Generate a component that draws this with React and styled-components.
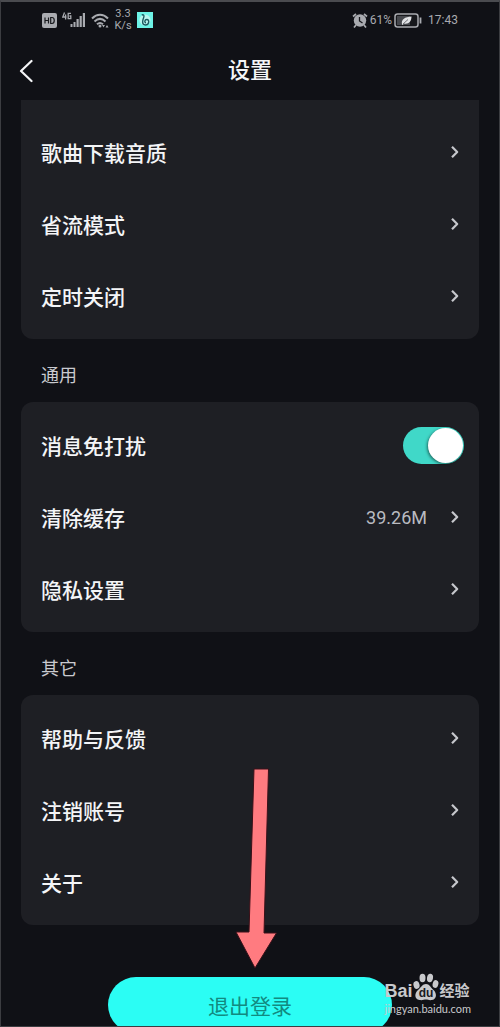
import React, { useState } from "react";
import styled, { createGlobalStyle, css } from "styled-components";

const GlobalStyle = createGlobalStyle`
	* {
		box-sizing: border-box;
	}

	body {
		margin: 0;
		background-color: #101116;
		color: #f4f5f7;
		font-family: Roboto, "Noto Sans CJK SC", sans-serif;
	}
`;

const Screen = styled.div`
	position: relative;
	height: 100vh;
	overflow: hidden;
	border: 1px solid #3c3d41;
	border-top: 2px solid #4a4b4f;
`;

const StatusBar = styled.div`
	display: flex;
	justify-content: space-between;
	align-items: center;
	height: 36px;
	padding: 0 41px;
	color: #a9abb0;
	font-size: 12px;
`;

const StatusGroup = styled.div`
	display: flex;
	align-items: center;
	gap: ${({ gap }) => gap}px;
`;

const Speed = styled.span`
	width: 18px;
	font-size: 11px;
	line-height: 12px;
	text-align: center;
`;

const Clock = styled.span`margin-left: 4px;`;

const Header = styled.header`
	display: grid;
	grid-template-columns: 50px 1fr 50px;
	align-items: center;
	height: 62px;
	padding-top: 4px;
`;

const BackButton = styled.button`
	display: flex;
	justify-content: center;
	padding: 0;
	border: 0;
	background: none;
	color: #f4f5f7;
`;

const Title = styled.h1`
	margin: 0;
	font-size: 22px;
	font-weight: 500;
	line-height: 30px;
	text-align: center;
`;

const Content = styled.main`padding: 0 20px;`;

const Card = styled.section`
	padding: 7px 15px 7px 20px;
	border-radius: 12px;
	background-color: #1e1f24;

	${({ continued }) =>
		continued &&
		css`
			padding-top: 16px;
			border-top-left-radius: 0;
			border-top-right-radius: 0;
		`};
`;

const SectionTitle = styled.h2`
	margin: 0;
	padding: 24px 20px 13px;
	color: #c9cacf;
	font-size: 18px;
	font-weight: 400;
	line-height: 26px;
`;

const rowStyle = css`
	display: flex;
	align-items: center;
	width: 100%;
	height: 72px;
	padding: 0;
	border: 0;
	background: none;
	color: inherit;
	font: inherit;
	font-size: 21px;
	font-weight: 500;
	text-align: left;
`;

const LinkRow = styled.button`
	${rowStyle};
	padding-right: 4px;
`;

const SwitchRow = styled.label`${rowStyle};`;

const RowLabel = styled.span`
	flex: 1;
`;

const RowValue = styled.span`
	margin-right: 23px;
	color: #b9bbc1;
	font-size: 18px;
	font-weight: 400;
`;

const Switch = styled.input`
	appearance: none;
	display: flex;
	width: 61px;
	height: 37px;
	margin: 0;
	border-radius: 19px;
	background-color: #55575e;

	&::before {
		content: "";
		width: 35px;
		height: 35px;
		margin: 1px;
		border-radius: 50%;
		background-color: #fff;
		box-shadow: -1px 1px 3px rgba(0, 0, 0, 0.5);
	}

	&:checked {
		justify-content: flex-end;
		background-color: #40d8c8;
	}
`;

const LogoutButton = styled.button`
	display: block;
	width: 62%;
	height: 56px;
	margin: 52px auto 0;
	border: 0;
	border-radius: 28px;
	background-color: #2bfdf4;
	color: #128a80;
	font: inherit;
	font-size: 21px;
`;

const ArrowMark = styled.svg`
	position: absolute;
	top: 766px;
	left: 234px;
`;

const Watermark = styled.div`
	position: absolute;
	right: 28px;
	bottom: 9px;
	color: #c8c9cc;
	font-family: Lato, "Noto Sans CJK SC", sans-serif;
	font-size: 11px;
	line-height: 16px;
`;

const WatermarkBrand = styled.div`
	display: flex;
	align-items: flex-end;
	height: 28px;
	font-family: "Liberation Sans", "Noto Sans CJK SC", sans-serif;
	font-weight: 700;
	line-height: 20px;
`;

const BrandLatin = styled.span`font-size: 18px;`;

const BrandHan = styled.span`
	margin-left: 1px;
	font-size: 15px;
`;

const HdIcon = () =>
	<svg width="15" height="15" viewBox="0 0 15 15">
		<rect width="15" height="15" rx="2" fill="currentColor" />
		<path
			d="M3 4.5v6M6.500 4.500v6M3 7.500h3.500M8.700 4.500v6h1.300c3 0 3-6 0-6z"
			fill="none"
			stroke="#17181c"
			strokeWidth="1.2"
		/>
	</svg>;

const SignalIcon = () =>
	<svg width="24" height="16" viewBox="0 0 24 16">
		<path
			d="M2.500 .5L.8 5h3.700M3.600 2.500V7.500M9 1.300H6.200v5.400h2.600V4H7.500"
			fill="none"
			stroke="currentColor"
			strokeWidth="1.3"
		/>
		<path
			d="M8.500 12h2v3H8.500zM11.500 10h2v5h-2zM14.500 7h2.200v8h-2.200zM17.600 4h2.200v11h-2.200zM20.800 1h2.200v14h-2.200z"
			fill="currentColor"
		/>
	</svg>;

const WifiIcon = () =>
	<svg width="18" height="15" viewBox="0 0 18 15">
		<path
			d="M1 5.500c5-5 11-5 16 0M3.500 8.500c3.500-3.300 7.500-3.300 11 0M6 11.300c2-1.700 4-1.700 6 0"
			fill="none"
			stroke="currentColor"
			strokeWidth="2"
		/>
		<circle cx="9" cy="13" r="1.5" fill="currentColor" />
		<path d="M11 12h3l-1.500 2.500zM14.500 14.500h3l-1.500-2.500z" fill="currentColor" />
	</svg>;

const AppIcon = () =>
	<svg width="16" height="16" viewBox="0 0 16 16">
		<rect width="16" height="16" fill="#6df3e6" />
		<circle cx="8" cy="8" r="5.500" fill="#b9f5ee" />
		<path
			d="M4.800 3c1.700-.8 2.700.5 1.900 2.500C5.500 8.500 4.500 12.700 8.300 13c3.700.2 4.700-5.500 1.500-5.500-2.300 0-2.600 3-.8 3.200"
			fill="none"
			stroke="#1c5a60"
			strokeWidth="1.4"
		/>
	</svg>;

const AlarmIcon = () =>
	<svg width="16" height="15" viewBox="0 0 16 15">
		<circle cx="8" cy="7.500" r="6.200" fill="currentColor" />
		<path
			d="M1 3.500L4 1M15 3.500L12 1M4 12l-2 2.500M12 12l2 2.500"
			stroke="currentColor"
			strokeWidth="1.7"
		/>
		<path d="M7.500 4v4l3 2" fill="none" stroke="#17181c" strokeWidth="1.3" />
	</svg>;

const BatteryIcon = () =>
	<svg width="28" height="15" viewBox="0 0 28 15">
		<rect
			x="1"
			y="1"
			width="23"
			height="13"
			rx="2.500"
			fill="#17181c"
			stroke="currentColor"
			strokeWidth="1.5"
		/>
		<rect x="3" y="3" width="13" height="9" fill="#46484d" />
		<path
			d="M8 11.500C7 6 11 4 17.500 3.500c0 5-3 8-7.500 7L8.500 12z"
			fill="#e2e3e6"
		/>
		<path d="M9 11l5-4.500" stroke="#55575c" strokeWidth=".8" />
		<path d="M26.500 4.500v6" stroke="currentColor" strokeWidth="1.8" />
	</svg>;

const BackIcon = () =>
	<svg width="14" height="24" viewBox="0 0 14 24">
		<path
			d="M12.500 2L2 12l10.500 10"
			fill="none"
			stroke="currentColor"
			strokeWidth="2.2"
			strokeLinecap="round"
			strokeLinejoin="round"
		/>
	</svg>;

const ChevronIcon = () =>
	<svg width="10" height="14" viewBox="0 0 10 14">
		<path
			d="M2 1.800L7.200 7 2 12.200"
			fill="none"
			stroke="#c6c7cc"
			strokeWidth="2.200"
			strokeLinejoin="round"
		/>
	</svg>;

const PawIcon = () =>
	<svg width="26" height="28" viewBox="0 0 26 28">
		<g fill="currentColor">
			<ellipse cx="3.500" cy="12" rx="3" ry="4" transform="rotate(-15 3.500 12)" />
			<ellipse cx="9.500" cy="5" rx="3" ry="4.200" />
			<ellipse cx="17" cy="5" rx="3" ry="4.200" transform="rotate(10 17 5)" />
			<ellipse cx="22.500" cy="11" rx="2.800" ry="4" transform="rotate(15 22.500 11)" />
			<path d="M13 11c3.500 0 4.500 3.500 7.500 6s4 9-1.500 10c-3 .5-4-.5-6-.5s-3.500 1-6.500.5C1 26 1.500 20 5 17s4.500-6 8-6z" />
		</g>
		<text
			x="13"
			y="24"
			fill="#191a1e"
			fontSize="12"
			fontWeight="700"
			textAnchor="middle"
		>
			du
		</text>
	</svg>;

const Row = ({ label, value }) =>
	<LinkRow type="button">
		<RowLabel>
			{label}
		</RowLabel>
		{value &&
			<RowValue>
				{value}
			</RowValue>}
		<ChevronIcon />
	</LinkRow>;

export default function App() {
	const [muted, setMuted] = useState(true);

	return (
		<Screen>
			<GlobalStyle />

			<StatusBar>
				<StatusGroup gap={5}>
					<HdIcon />
					<SignalIcon />
					<WifiIcon />
					<Speed>3.3 K/s</Speed>
					<AppIcon />
				</StatusGroup>
				<StatusGroup gap={2}>
					<AlarmIcon />
					<span>61%</span>
					<BatteryIcon />
					<Clock>17:43</Clock>
				</StatusGroup>
			</StatusBar>

			<Header>
				<BackButton type="button" aria-label="返回">
					<BackIcon />
				</BackButton>
				<Title>设置</Title>
			</Header>

			<Content>
				<Card continued>
					<Row label="歌曲下载音质" />
					<Row label="省流模式" />
					<Row label="定时关闭" />
				</Card>

				<SectionTitle>通用</SectionTitle>
				<Card>
					<SwitchRow>
						<RowLabel>消息免打扰</RowLabel>
						<Switch
							type="checkbox"
							role="switch"
							checked={muted}
							onChange={e => setMuted(e.target.checked)}
						/>
					</SwitchRow>
					<Row label="清除缓存" value="39.26M" />
					<Row label="隐私设置" />
				</Card>

				<SectionTitle>其它</SectionTitle>
				<Card>
					<Row label="帮助与反馈" />
					<Row label="注销账号" />
					<Row label="关于" />
				</Card>

				<LogoutButton type="button">退出登录</LogoutButton>
			</Content>

			<ArrowMark width="42" height="202" viewBox="0 0 42 202">
				<path
					d="M19 1h14.500l-4.500 164h12.500L20 200 1 164h13z"
					fill="#ff7b80"
					stroke="#3a1018"
					strokeWidth="1"
				/>
			</ArrowMark>

			<Watermark>
				<WatermarkBrand>
					<BrandLatin>Bai</BrandLatin>
					<PawIcon />
					<BrandHan>经验</BrandHan>
				</WatermarkBrand>
				jingyan.baidu.com
			</Watermark>
		</Screen>
	);
}
